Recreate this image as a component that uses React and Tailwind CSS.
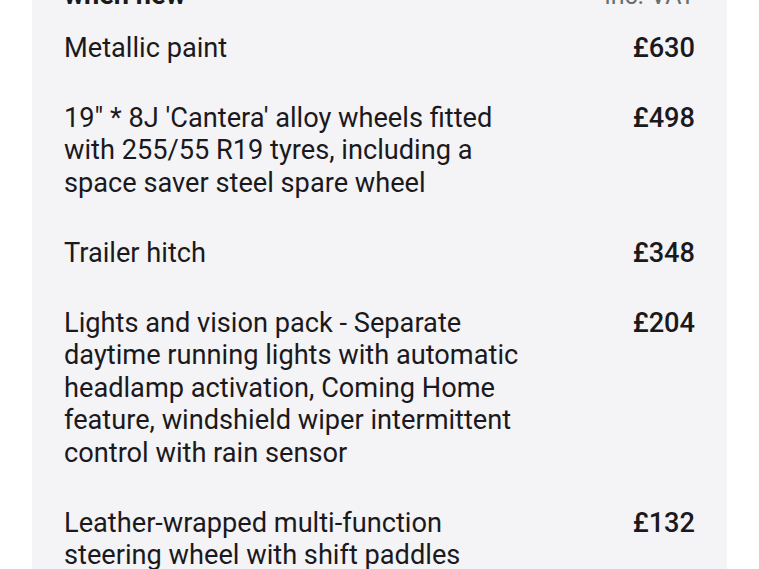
const options = [
  { label: "Metallic paint", price: "£630" },
  {
    label: "19\" * 8J 'Cantera' alloy wheels fitted with 255/55 R19 tyres, including a space saver steel spare wheel",
    price: "£498",
  },
  { label: "Trailer hitch", price: "£348" },
  {
    label:
      "Lights and vision pack - Separate daytime running lights with automatic headlamp activation, Coming Home feature, windshield wiper intermittent control with rain sensor",
    price: "£204",
  },
  { label: "Leather-wrapped multi-function steering wheel with shift paddles", price: "£132" },
];

export default function App() {
  return (
    <div className="min-h-screen bg-white font-['Roboto',sans-serif] text-[#1a191d]">
      <div className="mx-8 flex min-h-screen flex-col bg-[#f4f3f5] px-8 pb-10">
        {/* Header row, mostly scrolled off the top */}
        <div className="-mt-[21px] flex items-end justify-between">
          <h2 className="text-[27.2px] font-bold leading-[32.5px]">when new</h2>
          <span className="mb-[-1px] text-[25px] leading-[32.5px] text-[#65706f]">inc. VAT</span>
        </div>

        <ul className="mt-[20px] flex flex-col gap-[37.5px]">
          {options.map((o) => (
            <li key={o.price} className="flex items-start justify-between">
              <p className="w-[470px] text-[27.2px] leading-[32.5px]">{o.label}</p>
              <span className="text-[27.2px] font-medium leading-[32.5px]">{o.price}</span>
            </li>
          ))}
        </ul>
      </div>
    </div>
  );
}
